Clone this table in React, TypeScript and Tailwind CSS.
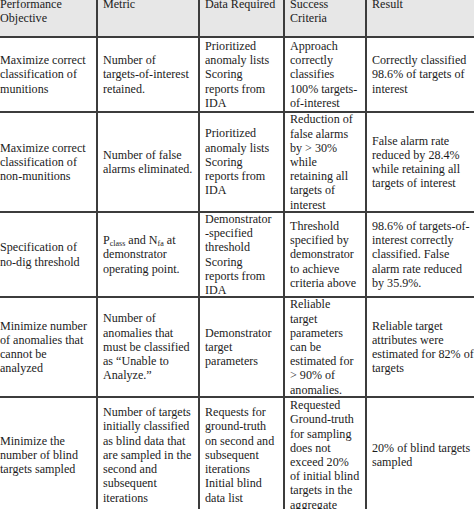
import type { ReactNode } from "react";

type Cell = ReactNode[];

const headers: Cell[] = [
  ["Performance", "Objective"],
  ["Metric"],
  ["Data Required"],
  ["Success", "Criteria"],
  ["Result"],
];

const rows: { height: string; cells: Cell[] }[] = [
  {
    height: "h-[75px]",
    cells: [
      ["Maximize correct", "classification of", "munitions"],
      ["Number of", "targets-of-interest", "retained."],
      ["Prioritized", "anomaly lists", "Scoring", "reports from", "IDA"],
      ["Approach", "correctly", "classifies", "100% targets-", "of-interest"],
      ["Correctly classified", "98.6% of targets of", "interest"],
    ],
  },
  {
    height: "h-[100px]",
    cells: [
      ["Maximize correct", "classification of", "non-munitions"],
      ["Number of false", "alarms eliminated."],
      ["Prioritized", "anomaly lists", "Scoring", "reports from", "IDA"],
      [
        "Reduction of",
        "false alarms",
        "by > 30%",
        "while",
        "retaining all",
        "targets of",
        "interest",
      ],
      ["False alarm rate", "reduced by 28.4%", "while retaining all", "targets of interest"],
    ],
  },
  {
    height: "h-[85px]",
    cells: [
      ["Specification of", "no-dig threshold"],
      [
        <>
          P<sub className="text-[8px]">class</sub> and N
          <sub className="text-[8px]">fa</sub> at
        </>,
        "demonstrator",
        "operating point.",
      ],
      ["Demonstrator", "-specified", "threshold", "Scoring", "reports from", "IDA"],
      ["Threshold", "specified by", "demonstrator", "to achieve", "criteria above"],
      [
        "98.6% of targets-of-",
        "interest correctly",
        "classified. False",
        "alarm rate reduced",
        "by 35.9%.",
      ],
    ],
  },
  {
    height: "h-[100px]",
    cells: [
      ["Minimize number", "of anomalies that", "cannot be", "analyzed"],
      ["Number of", "anomalies that", "must be classified", "as \u201cUnable to", "Analyze.\u201d"],
      ["Demonstrator", "target", "parameters"],
      [
        "Reliable",
        "target",
        "parameters",
        "can be",
        "estimated for",
        "> 90% of",
        "anomalies.",
      ],
      ["Reliable target", "attributes were", "estimated for 82% of", "targets"],
    ],
  },
  {
    height: "h-[116px]",
    cells: [
      ["Minimize the", "number of blind", "targets sampled"],
      [
        "Number of targets",
        "initially classified",
        "as blind data that",
        "are sampled in the",
        "second and",
        "subsequent",
        "iterations",
      ],
      [
        "Requests for",
        "ground-truth",
        "on second and",
        "subsequent",
        "iterations",
        "Initial blind",
        "data list",
      ],
      [
        "Requested",
        "Ground-truth",
        "for sampling",
        "does not",
        "exceed 20%",
        "of initial blind",
        "targets in the",
        "aggregate",
      ],
      ["20% of blind targets", "sampled"],
    ],
  },
];

const colWidths = ["w-[103px]", "w-[102px]", "w-[85px]", "w-[82px]", "w-[116px]"];

function Lines({ lines }: { lines: Cell }) {
  return (
    <div>
      {lines.map((l, i) => (
        <div key={i} className="whitespace-nowrap">
          {l}
        </div>
      ))}
    </div>
  );
}

export default function App() {
  return (
    <div className="w-[474px] h-[509px] overflow-hidden bg-white">
      <div
        className="-ml-[7px] -mt-[6px] w-[490px] text-[12.1px] leading-[14.2px] text-[#1c1c1c]"
        style={{ fontFamily: '"Liberation Serif", "Times New Roman", serif' }}
      >
        {/* Header */}
        <div className="flex h-[42px] bg-[#e7e7e7]">
          {headers.map((h, i) => (
            <div
              key={i}
              className={`${colWidths[i]} shrink-0 border-t-2 border-l-2 border-[#3c3c3c] pl-[5px] pt-[1px]`}
            >
              <Lines lines={h} />
            </div>
          ))}
        </div>

        {/* Body */}
        {rows.map((r, ri) => (
          <div key={ri} className={`flex ${r.height}`}>
            {r.cells.map((c, ci) => (
              <div
                key={ci}
                className={`${colWidths[ci]} shrink-0 flex items-center border-t-2 border-l-2 border-[#3c3c3c] pl-[5px] overflow-hidden`}
              >
                <Lines lines={c} />
              </div>
            ))}
          </div>
        ))}
      </div>
    </div>
  );
}
